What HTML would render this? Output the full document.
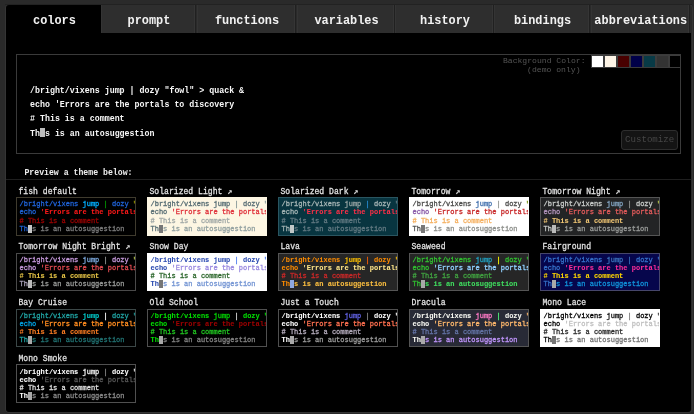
<!DOCTYPE html><html><head><meta charset="utf-8"><style>
*{margin:0;padding:0;box-sizing:border-box}
html,body{width:694px;height:414px;overflow:hidden;background:#2a2a2a;font-family:"Liberation Mono",monospace}
#wrap{position:absolute;left:0;top:0;width:694px;height:414px;filter:blur(0.3px)}
.tab{position:absolute;top:5px;height:28px;background:#2e2e2e;border-right:1px solid #202020;box-shadow:inset -1px 0 0 #353535, inset 1px 0 0 #343434}
.tab span{position:absolute;left:1px;right:-1px;top:10.1px;color:#f2f2f2;font-weight:bold;font-size:11.9px;line-height:12px;text-align:center;transform:scaleY(1.15)}
.tab.sel{background:#000;border-right:none;box-shadow:none;border-top-left-radius:3px}
#topline{position:absolute;left:5px;top:4px;width:687px;height:1px;background:#222}
#content{position:absolute;left:6px;top:33px;width:685px;height:378.8px;background:#000;border-radius:0 0 3px 3px}
#frame{position:absolute;left:4.5px;top:3.5px;width:688px;height:409px;border:1px solid #353535;border-radius:4px}
#mainbox{position:absolute;left:16.2px;top:54px;width:665.3px;height:99.7px;border:1px solid #3a3a3a}
.ml{position:absolute;left:30px;font-size:8.3px;font-weight:bold;color:#f8f8f8;white-space:pre;line-height:10px;transform:scaleY(1.06)}
.bgl{position:absolute;font-size:8.1px;color:#555;white-space:pre;line-height:9px;text-align:right}
.sw{position:absolute;top:54.5px;height:13.2px;width:12.9px;border:1px solid #3c3c3c}
#cust{position:absolute;left:621px;top:130.2px;width:57.3px;height:19.6px;background:#141414;border:1px solid #2e2e2e;border-radius:3px;color:#474747;font-size:9.1px;line-height:17.6px;text-align:center}
#cursor{position:absolute;left:40px;top:127.7px;width:4.5px;height:9.7px;background:#bdbdbd}
#prev{position:absolute;left:24.4px;top:167.7px;font-size:8.2px;font-weight:bold;color:#f0f0f0;line-height:10px;white-space:pre;transform:scaleY(1.06)}
#hr{position:absolute;left:6px;top:179px;width:685px;height:1px;background:#1f1f1f}
.lbl{position:absolute;font-size:8.1px;color:#e2e2e2;line-height:10px;white-space:pre;transform:scaleY(1.06);-webkit-text-stroke:0.25px currentColor}
.card{position:absolute;width:120px;height:38.6px;border:1px solid #444;overflow:hidden}
.tt{position:absolute;left:2.5px;font-size:7px;line-height:8.09px;white-space:pre;-webkit-text-stroke:0.3px currentColor}
.tt b{font-weight:bold}
.tt span[style*="bold"]{-webkit-text-stroke:0.05px currentColor}
.cur{}
</style></head><body><div id="wrap"><div id="frame"></div><div id="topline"></div><div class="tab sel" style="left:6px;width:95px"><span>colors</span></div><div class="tab" style="left:101px;width:95px"><span>prompt</span></div><div class="tab" style="left:197px;width:99px"><span>functions</span></div><div class="tab" style="left:297px;width:98px"><span>variables</span></div><div class="tab" style="left:395px;width:99px"><span>history</span></div><div class="tab" style="left:494px;width:96px"><span>bindings</span></div><div class="tab" style="left:590.5px;width:99.5px"><span>abbreviations</span></div><div id="content"></div><div id="mainbox"></div><div class="bgl" style="left:479.5px;top:56.2px;width:106px">Background Color:</div><div class="bgl" style="left:479.5px;top:64.5px;width:101px">(demo only)</div><div class="sw" style="left:591.00px;background:#ffffff"></div><div class="sw" style="left:603.93px;background:#fdf4e6"></div><div class="sw" style="left:616.86px;background:#480000"></div><div class="sw" style="left:629.79px;background:#000048"></div><div class="sw" style="left:642.72px;background:#083a46"></div><div class="sw" style="left:655.65px;background:#333333"></div><div class="sw" style="left:668.58px;background:#000000"></div><div id="cust">Customize</div><div class="ml" style="top:85.60px">/bright/vixens jump | dozy "fowl" &gt; quack &amp;</div><div class="ml" style="top:100.00px">echo 'Errors are the portals to discovery</div><div class="ml" style="top:114.30px"># This is a comment</div><div class="ml" style="top:128.60px">Th s is an autosuggestion</div><div id="cursor"></div><div id="prev">Preview a theme below:</div><div id="hr"></div><div class="lbl" style="left:18.5px;top:186.5px">fish default</div><div class="card" style="left:16px;top:197px;background:#000;border-color:#3f3b2e"><div class="tt" style="top:2.4px"><span style="color:#1f62d6">/bright/vixens</span> <span style="color:#00afff">jump</span> <span style="color:#009900">|</span> <span style="color:#1f62d6">dozy</span> <span style="color:#999900">"fowl"</span> <span style="color:#00afff">&gt;</span> <span style="color:#00afff">quack</span> <span style="color:#009900">&amp;</span><br><span style="color:#1f62d6">echo</span> <span style="font-weight:bold;color:#ff1a1a">'Errors are the portals to discovery</span><br><span style="color:#990000"># This is a comment</span><br><span style="color:#1f62d6">Th</span><span style="background:#c8c8c8;color:#c8c8c8">i</span><span style="color:#7a7a7a">s is an autosuggestion</span></div></div><div class="lbl" style="left:149.5px;top:186.5px">Solarized Light ↗</div><div class="card" style="left:147px;top:197px;background:#fdf6e3;border-color:#fdf6e3"><div class="tt" style="top:2.4px"><span style="color:#586e75">/bright/vixens</span> <span style="color:#586e75">jump</span> <span style="color:#839496">|</span> <span style="color:#586e75">dozy</span> <span style="color:#839496">"fowl"</span> <span style="color:#6c71c4">&gt;</span> <span style="color:#586e75">quack</span> <span style="color:#839496">&amp;</span><br><span style="color:#586e75">echo</span> <span style="color:#e0303a">'Errors are the portals to discovery</span><br><span style="color:#a3aaa8"># This is a comment</span><br><span style="color:#586e75">Th</span><span style="background:#777;color:#777">i</span><span style="color:#93a1a1">s is an autosuggestion</span></div></div><div class="lbl" style="left:280.5px;top:186.5px">Solarized Dark ↗</div><div class="card" style="left:278px;top:197px;background:#083540;border-color:#2a5560"><div class="tt" style="top:2.4px"><span style="color:#a3b3b3">/bright/vixens</span> <span style="color:#93a1a1">jump</span> <span style="color:#268bd2">|</span> <span style="color:#a3b3b3">dozy</span> <span style="color:#657b83">"fowl"</span> <span style="color:#6c71c4">&gt;</span> <span style="color:#93a1a1">quack</span> <span style="color:#268bd2">&amp;</span><br><span style="color:#a3b3b3">echo</span> <span style="font-weight:bold;color:#ff3048">'Errors are the portals to discovery</span><br><span style="color:#607880"># This is a comment</span><br><span style="color:#a3b3b3">Th</span><span style="background:#c0c8c8;color:#c0c8c8">i</span><span style="color:#607880">s is an autosuggestion</span></div></div><div class="lbl" style="left:411.5px;top:186.5px">Tomorrow ↗</div><div class="card" style="left:409px;top:197px;background:#fff;border-color:#fff"><div class="tt" style="top:2.4px"><span style="color:#4d4d4c">/bright/vixens</span> <span style="color:#4271ae">jump</span> <span style="color:#8e908c">|</span> <span style="color:#4d4d4c">dozy</span> <span style="color:#718c00">"fowl"</span> <span style="color:#3e999f">&gt;</span> <span style="color:#4271ae">quack</span> <span style="color:#8e908c">&amp;</span><br><span style="color:#8959a8">echo</span> <span style="color:#c82829">'Errors are the portals to discovery</span><br><span style="color:#f5b060"># This is a comment</span><br><span style="color:#4d4d4c">Th</span><span style="background:#777;color:#777">i</span><span style="color:#8e908c">s is an autosuggestion</span></div></div><div class="lbl" style="left:542.5px;top:186.5px">Tomorrow Night ↗</div><div class="card" style="left:540px;top:197px;background:#232425;border-color:#555"><div class="tt" style="top:2.4px"><span style="color:#c5c8c6">/bright/vixens</span> <span style="color:#81a2be">jump</span> <span style="color:#969896">|</span> <span style="color:#c5c8c6">dozy</span> <span style="color:#b9ca4a">"fowl"</span> <span style="color:#70c0b1">&gt;</span> <span style="color:#81a2be">quack</span> <span style="color:#969896">&amp;</span><br><span style="color:#b294bb">echo</span> <span style="color:#e05a5a">'Errors are the portals to discovery</span><br><span style="font-weight:bold;color:#f0c674"># This is a comment</span><br><span style="color:#c5c8c6">Th</span><span style="background:#bbb;color:#bbb">i</span><span style="color:#969896">s is an autosuggestion</span></div></div><div class="lbl" style="left:18.5px;top:242.3px">Tomorrow Night Bright ↗</div><div class="card" style="left:16px;top:252.8px;background:#000;border-color:#4a4a4a"><div class="tt" style="top:2.4px"><span style="color:#c397d8">/bright/vixens</span> <span style="color:#7aa6da">jump</span> <span style="color:#969896">|</span> <span style="color:#c397d8">dozy</span> <span style="color:#b9ca4a">"fowl"</span> <span style="color:#70c0b1">&gt;</span> <span style="color:#7aa6da">quack</span> <span style="color:#969896">&amp;</span><br><span style="color:#c397d8">echo</span> <span style="color:#e04a50">'Errors are the portals to discovery</span><br><span style="font-weight:bold;color:#e7c547"># This is a comment</span><br><span style="color:#a8a0b8">Th</span><span style="background:#bbb;color:#bbb">i</span><span style="color:#969896">s is an autosuggestion</span></div></div><div class="lbl" style="left:149.5px;top:242.3px">Snow Day</div><div class="card" style="left:147px;top:252.8px;background:#fff;border-color:#fff"><div class="tt" style="top:2.4px"><span style="font-weight:bold;color:#2a4ab0">/bright/vixens</span> <span style="font-weight:bold;color:#2a4ab0">jump</span> <span style="color:#4779ed">|</span> <span style="font-weight:bold;color:#2a4ab0">dozy</span> <span style="color:#4779ed">"fowl"</span> <span style="color:#4779ed">&gt;</span> <span style="color:#2a4ab0">quack</span> <span style="color:#4779ed">&amp;</span><br><span style="font-weight:bold;color:#2a4ab0">echo</span> <span style="color:#9a8ae0">'Errors are the portals to discovery</span><br><span style="color:#306a30"># This is a comment</span><br><span style="font-weight:bold;color:#2a4ab0">Th</span><span style="background:#777;color:#777">i</span><span style="color:#7596d4">s is an autosuggestion</span></div></div><div class="lbl" style="left:280.5px;top:242.3px">Lava</div><div class="card" style="left:278px;top:252.8px;background:#262626;border-color:#555"><div class="tt" style="top:2.4px"><span style="font-weight:bold;color:#ff8c00">/bright/vixens</span> <span style="font-weight:bold;color:#ffc000">jump</span> <span style="color:#ff6000">|</span> <span style="font-weight:bold;color:#ff8c00">dozy</span> <span style="color:#ffc000">"fowl"</span> <span style="color:#ffc000">&gt;</span> <span style="color:#ffc000">quack</span> <span style="color:#ff6000">&amp;</span><br><span style="font-weight:bold;color:#ff8c00">echo</span> <span style="font-weight:bold;color:#ffe68a">'Errors are the portals to discovery</span><br><span style="color:#c82828"># This is a comment</span><br><span style="font-weight:bold;color:#ff8c00">Th</span><span style="background:#8fa8e0;color:#8fa8e0">i</span><span style="font-weight:bold;color:#ffc040">s is an autosuggestion</span></div></div><div class="lbl" style="left:411.5px;top:242.3px">Seaweed</div><div class="card" style="left:409px;top:252.8px;background:#262626;border-color:#555"><div class="tt" style="top:2.4px"><span style="color:#30c030">/bright/vixens</span> <span style="color:#20a0c0">jump</span> <span style="color:#ffff00">|</span> <span style="color:#30c030">dozy</span> <span style="color:#30c030">"fowl"</span> <span style="color:#30c030">&gt;</span> <span style="color:#20a0c0">quack</span> <span style="color:#ffff00">&amp;</span><br><span style="color:#30c030">echo</span> <span style="color:#90d0ff">'Errors are the portals to discovery</span><br><span style="color:#40a040"># This is a comment</span><br><span style="color:#30c030">Th</span><span style="background:#aaa;color:#aaa">i</span><span style="font-weight:bold;color:#40e060">s is an autosuggestion</span></div></div><div class="lbl" style="left:542.5px;top:242.3px">Fairground</div><div class="card" style="left:540px;top:252.8px;background:#06064c;border-color:#46466a"><div class="tt" style="top:2.4px"><span style="color:#3570c8">/bright/vixens</span> <span style="color:#3a70b8">jump</span> <span style="color:#3a70b8">|</span> <span style="color:#3570c8">dozy</span> <span style="color:#3570c8">"fowl"</span> <span style="color:#3570c8">&gt;</span> <span style="color:#3a70b8">quack</span> <span style="color:#3a70b8">&amp;</span><br><span style="color:#3570c8">echo</span> <span style="font-weight:bold;color:#ff2e9a">'Errors are the portals to discovery</span><br><span style="font-weight:bold;color:#ffd700"># This is a comment</span><br><span style="color:#3570c8">Th</span><span style="background:#aaa;color:#aaa">i</span><span style="color:#1090d8">s is an autosuggestion</span></div></div><div class="lbl" style="left:18.5px;top:298.1px">Bay Cruise</div><div class="card" style="left:16px;top:308.6px;background:#000;border-color:#3c4848"><div class="tt" style="top:2.4px"><span style="color:#20a0a0">/bright/vixens</span> <span style="font-weight:bold;color:#00d0d0">jump</span> <span style="color:#ffffff">|</span> <span style="color:#20a0a0">dozy</span> <span style="color:#20a0a0">"fowl"</span> <span style="color:#20a0a0">&gt;</span> <span style="color:#00d0d0">quack</span> <span style="color:#ffffff">&amp;</span><br><span style="color:#00a0e0">echo</span> <span style="color:#ff8c20">'Errors are the portals to discovery</span><br><span style="font-weight:bold;color:#ff7f24"># This is a comment</span><br><span style="color:#20a0a0">Th</span><span style="background:#aaa;color:#aaa">i</span><span style="color:#207070">s is an autosuggestion</span></div></div><div class="lbl" style="left:149.5px;top:298.1px">Old School</div><div class="card" style="left:147px;top:308.6px;background:#000;border-color:#505050"><div class="tt" style="top:2.4px"><span style="font-weight:bold;color:#00e000">/bright/vixens</span> <span style="color:#00d000">jump</span> <span style="color:#dddddd">|</span> <span style="font-weight:bold;color:#00e000">dozy</span> <span style="color:#00e000">"fowl"</span> <span style="color:#00e000">&gt;</span> <span style="color:#00d000">quack</span> <span style="color:#dddddd">&amp;</span><br><span style="font-weight:bold;color:#00e000">echo</span> <span style="font-weight:bold;color:#a00000">'Errors are the portals to discovery</span><br><span style="color:#20c020"># This is a comment</span><br><span style="font-weight:bold;color:#00e000">Th</span><span style="background:#aaa;color:#aaa">i</span><span style="color:#808080">s is an autosuggestion</span></div></div><div class="lbl" style="left:280.5px;top:298.1px">Just a Touch</div><div class="card" style="left:278px;top:308.6px;background:#000;border-color:#505050"><div class="tt" style="top:2.4px"><span style="font-weight:bold;color:#ffffff">/bright/vixens</span> <span style="color:#6060e0">jump</span> <span style="color:#888">|</span> <span style="font-weight:bold;color:#ffffff">dozy</span> <span style="color:#fff">"fowl"</span> <span style="color:#fff">&gt;</span> <span style="color:#6060e0">quack</span> <span style="color:#888">&amp;</span><br><span style="font-weight:bold;color:#ffffff">echo</span> <span style="color:#ff7050">'Errors are the portals to discovery</span><br><span style="color:#b0a8b8"># This is a comment</span><br><span style="font-weight:bold;color:#ffffff">Th</span><span style="background:#aaa;color:#aaa">i</span><span style="color:#999">s is an autosuggestion</span></div></div><div class="lbl" style="left:411.5px;top:298.1px">Dracula</div><div class="card" style="left:409px;top:308.6px;background:#282a36;border-color:#555"><div class="tt" style="top:2.4px"><span style="font-weight:bold;color:#f8f8f2">/bright/vixens</span> <span style="color:#ff79c6">jump</span> <span style="color:#50fa7b">|</span> <span style="font-weight:bold;color:#f8f8f2">dozy</span> <span style="color:#ffb86c">"fowl"</span> <span style="color:#bd93f9">&gt;</span> <span style="color:#ff79c6">quack</span> <span style="color:#50fa7b">&amp;</span><br><span style="font-weight:bold;color:#f8f8f2">echo</span> <span style="color:#ffb86c">'Errors are the portals to discovery</span><br><span style="color:#6272a4"># This is a comment</span><br><span style="font-weight:bold;color:#f8f8f2">Th</span><span style="background:#aaa;color:#aaa">i</span><span style="color:#bd93f9">s is an autosuggestion</span></div></div><div class="lbl" style="left:542.5px;top:298.1px">Mono Lace</div><div class="card" style="left:540px;top:308.6px;background:#fff;border-color:#fff"><div class="tt" style="top:2.4px"><span style="color:#000">/bright/vixens</span> <span style="color:#111">jump</span> <span style="color:#777">|</span> <span style="color:#000">dozy</span> <span style="color:#333">"fowl"</span> <span style="color:#333">&gt;</span> <span style="color:#111">quack</span> <span style="color:#777">&amp;</span><br><span style="color:#000">echo</span> <span style="color:#c0c0c0">'Errors are the portals to discovery</span><br><span style="color:#303030"># This is a comment</span><br><span style="color:#000">Th</span><span style="background:#777;color:#777">i</span><span style="color:#777">s is an autosuggestion</span></div></div><div class="lbl" style="left:18.5px;top:353.8px">Mono Smoke</div><div class="card" style="left:16px;top:364.3px;background:#000;border-color:#505050"><div class="tt" style="top:2.4px"><span style="font-weight:bold;color:#fff">/bright/vixens</span> <span style="color:#eee">jump</span> <span style="color:#888">|</span> <span style="font-weight:bold;color:#fff">dozy</span> <span style="color:#eee">"fowl"</span> <span style="color:#eee">&gt;</span> <span style="color:#eee">quack</span> <span style="color:#888">&amp;</span><br><span style="font-weight:bold;color:#fff">echo</span> <span style="color:#555">'Errors are the portals to discovery</span><br><span style="color:#dddddd"># This is a comment</span><br><span style="font-weight:bold;color:#fff">Th</span><span style="background:#aaa;color:#aaa">i</span><span style="color:#888">s is an autosuggestion</span></div></div></div></body></html>
